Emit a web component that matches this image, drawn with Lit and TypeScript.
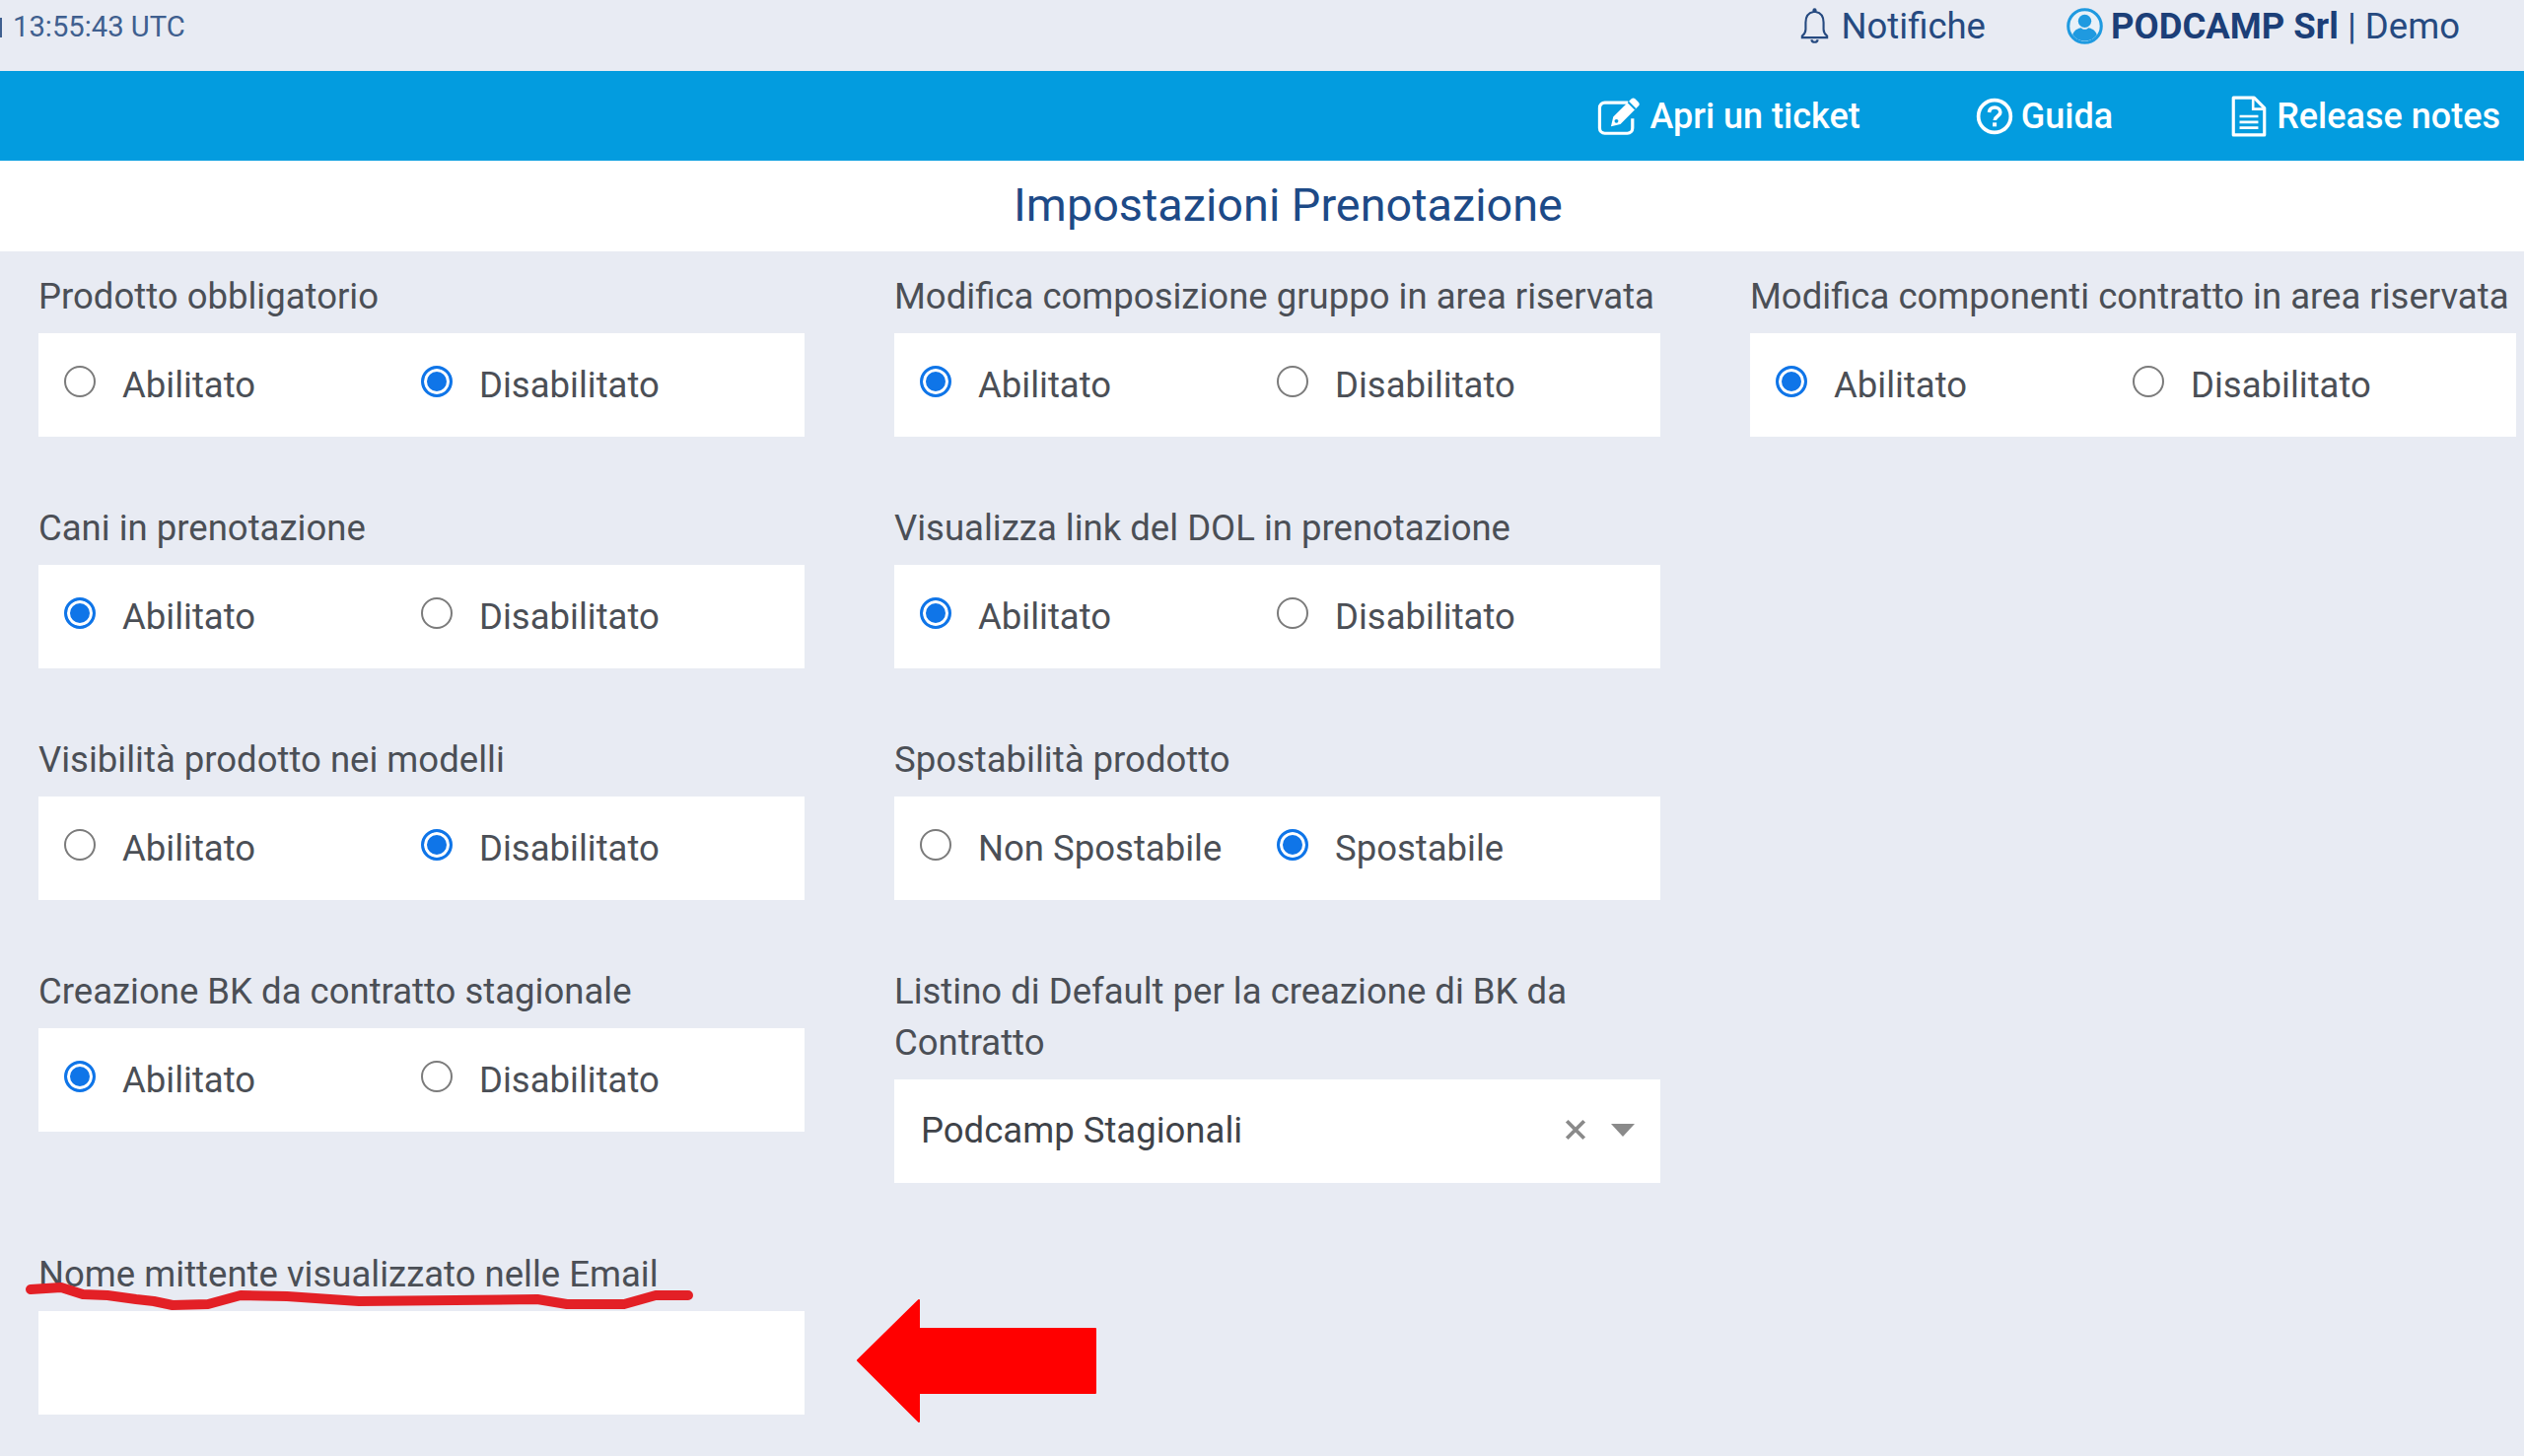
import { LitElement, html, css, svg } from "lit";
import { customElement } from "lit/decorators.js";

type Field = { label: string; a: string; b: string; on: 0 | 1 };

const ROWS: (Field | null)[] = [
  { label: "Prodotto obbligatorio", a: "Abilitato", b: "Disabilitato", on: 1 },
  { label: "Modifica composizione gruppo in area riservata", a: "Abilitato", b: "Disabilitato", on: 0 },
  { label: "Modifica componenti contratto in area riservata", a: "Abilitato", b: "Disabilitato", on: 0 },
  { label: "Cani in prenotazione", a: "Abilitato", b: "Disabilitato", on: 0 },
  { label: "Visualizza link del DOL in prenotazione", a: "Abilitato", b: "Disabilitato", on: 0 },
  null,
  { label: "Visibilità prodotto nei modelli", a: "Abilitato", b: "Disabilitato", on: 1 },
  { label: "Spostabilità prodotto", a: "Non Spostabile", b: "Spostabile", on: 1 },
  null,
  { label: "Creazione BK da contratto stagionale", a: "Abilitato", b: "Disabilitato", on: 0 },
];

const bell = svg`<path d="M17 3.200c0-1.200 2-1.200 2 0v1.600c5.200.9 7.600 4.800 7.600 10.200v6.500c0 3 1.300 4.700 3.400 6.500v1.500H6v-1.500c2.100-1.800 3.400-3.500 3.400-6.500V15c0-5.400 2.400-9.300 7.600-10.200z" fill="none" stroke="currentColor" stroke-width="2"/><path d="M15 31.500c.4 3.200 5.600 3.200 6 0" fill="none" stroke="currentColor" stroke-width="2"/>`;
const user = svg`<circle cx="18" cy="18" r="16.300" fill="#e8f1f8" stroke="#1f9ae0" stroke-width="3"/><circle cx="18" cy="13" r="6.500" fill="#1f9ae0"/><path d="M6 26.500c1.500-4.800 5.500-6.300 8.500-6.800 1.500 2 5.500 2 7 0 3 .5 7 2 8.500 6.800A14.600 14.600 0 0 1 18 32.500 14.600 14.600 0 0 1 6 26.500z" fill="#1f9ae0"/>`;
const edit = svg`<path d="M28 6H7.500A4.500 4.500 0 0 0 3 10.500v18A4.500 4.500 0 0 0 7.500 33h20a4.500 4.500 0 0 0 4.500-4.500V20" fill="none" stroke="currentColor" stroke-width="2.800"/><path d="M15 18.500 31 2.600c1-1 2.300-1 3.300 0l3 3c1 1 1 2.300 0 3.300L21.300 25 13 27z" fill="currentColor"/><path d="M28.200 5.400l6.300 6.300" stroke="#039cdf" stroke-width="1.600"/><circle cx="17.800" cy="22.200" r="1.700" fill="#039cdf"/>`;
const help = svg`<circle cx="18" cy="18" r="15.500" fill="none" stroke="currentColor" stroke-width="3.500"/><path d="M12.800 14.200c.3-3.100 2.500-4.700 5.400-4.700 3 0 5.300 1.800 5.300 4.500 0 4-5.300 4-5.300 7.800" fill="none" stroke="currentColor" stroke-width="3.400"/><rect x="16.200" y="24" width="3.800" height="3.800" fill="currentColor"/>`;
const file = svg`<path d="M3 2h20l10 10v26H3z" fill="none" stroke="currentColor" stroke-width="3" stroke-linejoin="round"/><path d="M22 2v11h11" fill="none" stroke="currentColor" stroke-width="2.500"/><path d="M9 20h18M9 25.500h18M9 31h18" stroke="currentColor" stroke-width="2.600"/>`;

@customElement("app-root")
export class AppRoot extends LitElement {
  static styles = css`
    :host {
      display: block;
      position: relative;
      width: 2560px;
      height: 1477px;
      overflow: hidden;
      background: #e8ebf3;
      font-family: Roboto, "Liberation Sans", sans-serif;
      color: #4b4f56;
    }
    .top {
      height: 72px;
      display: flex;
      align-items: center;
      justify-content: space-between;
      box-sizing: border-box;
      padding: 0 65px 20px 13px;
      color: #264a80;
      font-size: 36.500px;
      position: relative;
    }
    .clock { font-size: 29.200px; color: #3f5f8f; position: relative; top: 1px; }
    .tick { width: 2px; height: 20px; background: #3f5f8f; position: absolute; left: 0; top: 18px; }
    .top-right { display: flex; align-items: center; gap: 82px; }
    .item { display: flex; align-items: center; gap: 11px; white-space: nowrap; }
    .item b { font-weight: 700; color: #1c3f78; }
    .user { gap: 8px; }
    .bell { width: 33px; height: 38px; }
    .usr { width: 37px; height: 37px; }
    .blue {
      height: 91px;
      background: #039cdf;
      display: flex;
      align-items: center;
      justify-content: flex-end;
      gap: 117px;
      padding-right: 24px;
      color: #fff;
      font-size: 36px;
      font-weight: 500;
    }
    .blue .item { gap: 8px; }
    .blue .doc { gap: 7px; }
    .blue svg { height: 42px; width: 42px; }
    .blue svg.wide { width: 46px; height: 44px; }
    .blue svg.help { width: 38px; height: 38px; }
    .title {
      height: 92px;
      background: #fff;
      display: flex;
      align-items: center;
      justify-content: center;
      box-sizing: border-box;
      padding: 0 0 3px 53px;
      font-size: 46.800px;
      color: #1d4a87;
    }
    .grid {
      display: grid;
      grid-template-columns: repeat(3, 777px);
      column-gap: 91px;
      row-gap: 67px;
      padding: 20px 0 0 39px;
      align-items: start;
    }
    .label {
      font-size: 36.500px;
      line-height: 52px;
      margin-bottom: 11px;
    }
    .nowrap { white-space: nowrap; }
    .box {
      height: 105px;
      background: #fff;
      box-sizing: border-box;
      display: flex;
      align-items: center;
    }
    .radios { padding-left: 26px; }
    .opt {
      width: 362px;
      display: flex;
      align-items: center;
      gap: 27px;
      font-size: 36.500px;
    }
    .radio {
      width: 32px;
      height: 32px;
      box-sizing: border-box;
      border-radius: 50%;
      border: 2.500px solid #7b7b7b;
      position: relative;
      top: -4px;
      flex: none;
    }
    .radio.on { border: 3px solid #0f75e8; background: #0f75e8; box-shadow: inset 0 0 0 3px #fff; }
    .select {
      padding: 0 26px 3px 27px;
      justify-content: space-between;
      font-size: 36.500px;
      color: #3f4349;
    }
    .actions { display: flex; align-items: center; gap: 24px; color: #8a8a8a; }
    .x { width: 24px; height: 24px; }
    .caret { width: 0; height: 0; border-left: 12.500px solid transparent; border-right: 12.500px solid transparent; border-top: 13px solid #8a8a8a; }
    .overlay { position: absolute; left: 0; top: 0; width: 2560px; height: 1477px; pointer-events: none; }
  `;

  private field(f: Field | null) {
    if (!f) return html`<div></div>`;
    return html`<div>
      <div class="label nowrap">${f.label}</div>
      <div class="box radios">
        <div class="opt"><span class="radio ${f.on === 0 ? "on" : ""}"></span>${f.a}</div>
        <div class="opt"><span class="radio ${f.on === 1 ? "on" : ""}"></span>${f.b}</div>
      </div>
    </div>`;
  }

  render() {
    return html`
      <div class="top">
        <span class="tick"></span>
        <span class="clock">13:55:43 UTC</span>
        <div class="top-right">
          <div class="item"><svg class="bell" viewBox="5 0 26 36">${bell}</svg>Notifiche</div>
          <div class="item user"><svg class="usr" viewBox="0 0 36 36">${user}</svg><span><b>PODCAMP Srl</b> | Demo</span></div>
        </div>
      </div>
      <div class="blue">
        <div class="item"><svg class="wide" viewBox="0 0 40 36">${edit}</svg>Apri un ticket</div>
        <div class="item"><svg class="help" viewBox="0 0 36 36">${help}</svg>Guida</div>
        <div class="item doc"><svg viewBox="0 0 36 40">${file}</svg>Release notes</div>
      </div>
      <div class="title">Impostazioni Prenotazione</div>
      <div class="grid">
        ${ROWS.map((f) => this.field(f))}
        <div>
          <div class="label">Listino di Default per la creazione di BK da Contratto</div>
          <div class="box select">
            <span>Podcamp Stagionali</span>
            <span class="actions">
              <svg class="x" viewBox="0 0 22 22"><path d="M3 3l16 16M19 3L3 19" stroke="currentColor" stroke-width="3.500" fill="none"/></svg>
              <span class="caret"></span>
            </span>
          </div>
        </div>
        <div></div>
        <div>
          <div class="label nowrap">Nome mittente visualizzato nelle Email</div>
          <div class="box"></div>
        </div>
      </div>
      <svg class="overlay" viewBox="0 0 2560 1477">
        <path d="M31 1308 L62 1306 L84 1313 L109 1314 L138 1318 L156 1320 L175 1324 L211 1323 L244 1314 L291 1315 L364 1320 L545 1318 L575 1323 L633 1323 L665 1314 L698 1314" fill="none" stroke="#e32026" stroke-width="10" stroke-linecap="round" stroke-linejoin="round"/>
        <path d="M870 1380 L932 1319 L932 1348 L1111 1348 L1111 1413 L932 1413 L932 1442 Z" fill="#ff0000" stroke="#ff0000" stroke-width="2" stroke-linejoin="round"/>
      </svg>
    `;
  }
}
